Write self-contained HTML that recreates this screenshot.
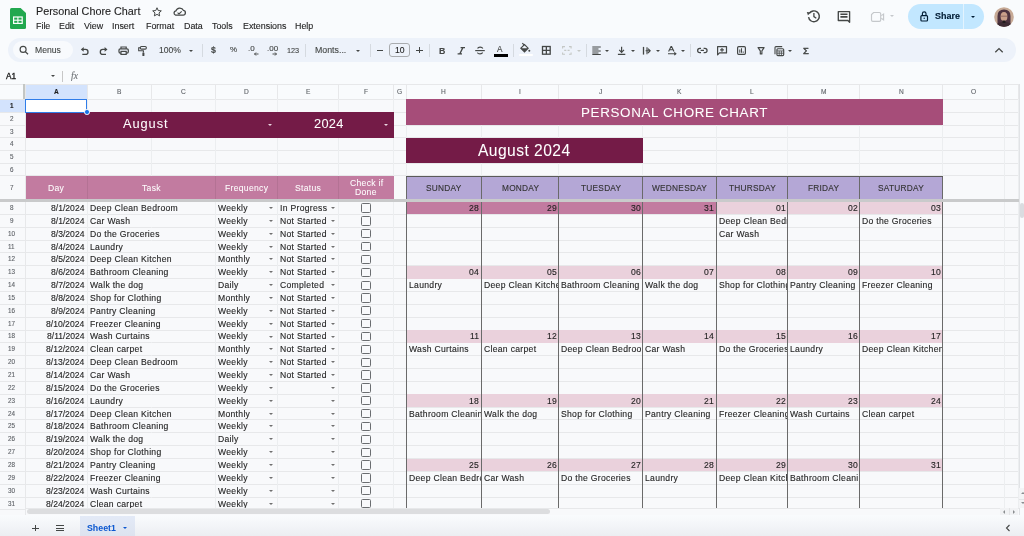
<!DOCTYPE html>
<html><head><meta charset="utf-8"><style>
html,body{margin:0;padding:0;}
body{width:1024px;height:536px;position:relative;overflow:hidden;background:#f9fbfd;font-family:"Liberation Sans",sans-serif;}
body>div,body>svg{position:absolute;}
div>div{position:absolute;}
.t{position:absolute;white-space:nowrap;will-change:transform;-webkit-text-stroke:0.12px currentColor;}
.tri{width:0;height:0;border-style:solid;position:absolute;}
</style></head><body>
<svg style="position:absolute;left:10.2px;top:7.8px" width="16" height="21" viewBox="0 0 16 20.8">
<path d="M1.5 0 H10.6 L16 5 V19.3 Q16 20.8 14.5 20.8 H1.5 Q0 20.8 0 19.3 V1.5 Q0 0 1.5 0Z" fill="#22a84f"/>
<rect x="3.6" y="8.9" width="8.6" height="6.4" fill="none" stroke="#fff" stroke-width="1.2"/>
<line x1="3.6" y1="12.1" x2="12.2" y2="12.1" stroke="#fff" stroke-width="1.1"/>
<line x1="7.9" y1="8.9" x2="7.9" y2="15.3" stroke="#fff" stroke-width="1.1"/>
</svg>
<div class="t" style="left:35.60px;top:5.66px;font-size:10.8px;line-height:10.8px;color:#1f1f1f;">Personal Chore Chart</div>
<svg style="position:absolute;left:151px;top:5.8px" width="12" height="12" viewBox="0 0 24 24"><path d="M12 3.5l2.5 5.6 6.1.6-4.6 4.1 1.3 6-5.3-3.1-5.3 3.1 1.3-6-4.6-4.1 6.1-.6z" fill="none" stroke="#444746" stroke-width="2" stroke-linejoin="round"/></svg>
<svg style="position:absolute;left:0;top:0" width="200" height="24" viewBox="0 0 200 24"><path d="M175.6 15.1H183.1A2.35 2.35 0 0 0 183.5 10.45A4.1 4.1 0 0 0 175.9 10.9A2.15 2.15 0 0 0 175.6 15.1Z" fill="none" stroke="#444746" stroke-width="1.3"/><path d="M177.6 12.6L179 14L181.7 11.4" fill="none" stroke="#444746" stroke-width="1.05"/></svg>
<div class="t" style="left:35.60px;top:21.87px;font-size:8.9px;line-height:8.9px;color:#1f1f1f;">File</div>
<div class="t" style="left:59.00px;top:21.87px;font-size:8.9px;line-height:8.9px;color:#1f1f1f;">Edit</div>
<div class="t" style="left:84.00px;top:21.87px;font-size:8.9px;line-height:8.9px;color:#1f1f1f;">View</div>
<div class="t" style="left:112.30px;top:21.87px;font-size:8.9px;line-height:8.9px;color:#1f1f1f;">Insert</div>
<div class="t" style="left:145.50px;top:21.87px;font-size:8.9px;line-height:8.9px;color:#1f1f1f;">Format</div>
<div class="t" style="left:183.50px;top:21.87px;font-size:8.9px;line-height:8.9px;color:#1f1f1f;">Data</div>
<div class="t" style="left:212.00px;top:21.87px;font-size:8.9px;line-height:8.9px;color:#1f1f1f;">Tools</div>
<div class="t" style="left:243.00px;top:21.87px;font-size:8.9px;line-height:8.9px;color:#1f1f1f;">Extensions</div>
<div class="t" style="left:295.00px;top:21.87px;font-size:8.9px;line-height:8.9px;color:#1f1f1f;">Help</div>
<div style="left:908.40px;top:4.00px;width:75.80px;height:24.80px;background:#c2e7ff;border-radius:12.4px"></div>
<div style="left:963.40px;top:4.00px;width:0.80px;height:24.80px;background:#f9fbfd;opacity:.6"></div>
<div class="t" style="left:934.60px;top:11.98px;font-size:9.0px;line-height:9.0px;color:#001d35;font-weight:bold;">Share</div>
<div class="tri" style="left:971.3px;top:15.8px;border-width:2.4px 2.35px 0 2.35px;border-color:#001d35 transparent transparent transparent"></div>
<svg style="position:absolute;left:994px;top:7px" width="20" height="20" viewBox="0 0 20 20"><defs><clipPath id="cp"><circle cx="10" cy="10" r="9.8"/></clipPath></defs><g clip-path="url(#cp)"><rect width="20" height="20" fill="#c7aa96"/><path d="M3.5 20V9Q3.5 2.5 10 2.5Q16.5 2.5 16.5 9V20Z" fill="#4d3340"/><ellipse cx="10" cy="9.6" rx="3.4" ry="4.6" fill="#c99f8a"/><path d="M6.6 9.2h6.8" stroke="#6b4a4a" stroke-width=".6"/><path d="M2 20Q2 15 10 14.8Q18 15 18 20Z" fill="#3d2b33"/><rect x="8.6" y="13.5" width="2.8" height="2.4" fill="#1e1a1c"/></g></svg>
<div style="left:7.80px;top:37.90px;width:1008.20px;height:24.20px;background:#edf2fa;border-radius:12px"></div>
<div style="left:12.50px;top:41.00px;width:60.90px;height:18.00px;background:#f8fafd;border-radius:9px"></div>
<div class="t" style="left:35.00px;top:46.32px;font-size:8.6px;line-height:8.6px;color:#444746;">Menus</div>
<svg style="position:absolute;left:0;top:0" width="1024" height="100" viewBox="0 0 1024 100">
<g fill="none" stroke="#444746" stroke-linecap="butt">
<circle cx="23.1" cy="49.4" r="3" stroke-width="1.15"/><path d="M25.3 51.6L28 54.3" stroke-width="1.3"/>
<path d="M83 49.4H85.5A2.5 2.5 0 0 1 85.5 54.4H82.3" stroke-width="1.3"/>
<path d="M105.3 49.4H102.8A2.5 2.5 0 0 0 102.8 54.4H106" stroke-width="1.3"/>
<path d="M121 48.8V47H126.2V48.8" stroke-width="1.2"/>
<rect x="119" y="48.8" width="9.3" height="4.3" rx="1.3" stroke-width="1.25"/>
<rect x="121" y="51.4" width="5.2" height="3" fill="#edf2fa" stroke-width="1.2"/>
<rect x="140.3" y="46.5" width="6" height="2.6" rx="1.1" stroke-width="1.15"/>
<path d="M140.3 47.8H138.7V50.8H143.4V52.6" stroke-width="1.1"/>
<path d="M460.6 47.6H465M457.6 53.9H462M462.9 47.6L459.8 53.9" stroke-width="1.25"/>
<path d="M482.8 48.4C482 46.7 478.2 46.7 477.6 48.5M477.4 52.6C478.1 54.3 482 54.3 482.6 52.5" stroke-width="1.15"/>
<path d="M475.2 50.6H484.8" stroke-width="1.15"/>
<path d="M520.9 48.2L524.5 44.6L528.1 48.2L524.5 51.8Z" stroke-width="1.2"/>
<path d="M522.3 43.2L524.3 45.2" stroke-width="1.2"/>
<rect x="542.5" y="46.5" width="7.7" height="7.7" stroke-width="1.3"/>
<path d="M546.35 46.5V54.2M542.5 50.35H550.2" stroke-width="1.3"/>
<path d="M562.6 48.6V46.6H565M569 46.6H571.1V48.6M571.1 52.4V54.3H569M565 54.3H562.6V52.4M564.2 50.4H566.3M567.6 50.4H569.6" stroke="#c4c7c5" stroke-width="1.1"/>
<path d="M592.3 46.9H600.8M592.3 49H598.5M592.3 51H600.8M592.3 53H598.5M592.3 54.4H600.8" stroke-width="1.05"/>
<path d="M621.6 46.7V52.3M619.2 49.9L621.6 52.3L624 49.9M617.9 54.3H625.3" stroke-width="1.2"/>
<path d="M643.5 46.9V54.6" stroke-width="1.3"/>
<path d="M645.6 50.8H650M648 48.6L650.2 50.8L648 53M647 47.3V54.3" stroke-width="1.1"/>
<path d="M668.6 51.5L671 46.5H671.6L674 51.5M669.5 49.8H673.1M668 53.8H675.6M674.3 52.4L675.9 53.8L674.3 55.2" stroke-width="1.1"/>
<path d="M701 48.3H699.8A2.15 2.15 0 0 0 699.8 52.6H701M703.6 48.3H704.9A2.15 2.15 0 0 1 704.9 52.6H703.6M700.6 50.45H704" stroke-width="1.25"/>
<path d="M717.6 54.8V46.6H726.5V52.9H719.5Z" stroke-width="1.2" stroke-linejoin="round"/>
<path d="M722 48V51.8M720.1 49.9H723.9" stroke-width="1.2"/>
<rect x="737.6" y="46.6" width="7.8" height="7.8" rx="1.1" stroke-width="1.2"/>
<path d="M739.8 52.7V49.5M741.5 52.7V48.3M743.2 52.7V51.4" stroke-width="1.05"/>
<path d="M758.1 47.6H764.1L761.9 50.9V53.9H760.3V50.9Z" stroke-width="1.15" stroke-linejoin="round"/>
<path d="M775 54.3V47.6Q775 46.6 776 46.6H782.2" stroke-width="1.1"/>
<rect x="776.9" y="48.7" width="6.8" height="6.9" rx="1" stroke-width="1.15"/>
<path d="M777 50.9H783.6M779.2 51V55.5M781.4 51V55.5M777 53.2H783.6" stroke-width=".8"/>
<path d="M995.3 52.2L999 48.6L1002.7 52.2" stroke-width="1.3"/>
<circle cx="813.9" cy="16.3" r="5.4" stroke-width="1.45" stroke-dasharray="29 5" transform="rotate(215 813.9 16.3)"/>
<path d="M813.9 13.1V16.6L816.3 18.3" stroke-width="1.3"/>
<path d="M838.3 11.6H849.6V22.2L847.9 20.5H838.3Z" stroke-width="1.35" stroke-linejoin="round"/>
<path d="M840.4 14.3H847.5M840.4 16.9H847.5" stroke-width="1.6"/>
<path d="M873.6 12.5H879.4Q880.7 12.5 880.7 13.8V20.1Q880.7 21.4 879.4 21.4H872.8Q871.5 21.4 871.5 20.1V14.6Z" stroke="#c5c8cb" stroke-width="1.15"/>
<path d="M881.3 15.6L883.6 14V19.9L881.3 18.3" stroke="#c5c8cb" stroke-width="1.1"/>
<rect x="920.9" y="15.6" width="6.6" height="5.4" rx=".9" stroke="#001d35" stroke-width="1.2"/>
<path d="M922.4 15.6V13.6A1.8 1.8 0 0 1 926 13.6V15.6" stroke="#001d35" stroke-width="1.15"/>
</g>
<g fill="#444746" stroke="none">
<path d="M80.8 49.4L83.7 47.1V51.7Z"/>
<path d="M107.5 49.4L104.6 47.1V51.7Z"/>
<rect x="142.4" y="52.5" width="2" height="3.4" rx=".5"/>
<path d="M520.9 48.2L528.1 48.2L524.5 51.8Z"/>
<circle cx="529.3" cy="50.7" r="1"/>
<path d="M806.8 12.1L810.9 12.4L807.9 15.3Z"/>
<circle cx="924.2" cy="18.3" r=".7" fill="#001d35"/>
</g>
</svg>
<div class="t" style="left:158.60px;top:46.32px;font-size:8.6px;line-height:8.6px;color:#444746;">100%</div>
<div class="tri" style="left:188.90px;top:49.80px;border-width:2.4px 2.3px 0 2.3px;border-color:#444746 transparent transparent transparent"></div>
<div style="left:201.80px;top:43.50px;width:1.00px;height:13.50px;background:#d5dae0"></div>
<div style="left:305.00px;top:43.50px;width:1.00px;height:13.50px;background:#d5dae0"></div>
<div style="left:370.00px;top:43.50px;width:1.00px;height:13.50px;background:#d5dae0"></div>
<div style="left:429.00px;top:43.50px;width:1.00px;height:13.50px;background:#d5dae0"></div>
<div style="left:513.10px;top:43.50px;width:1.00px;height:13.50px;background:#d5dae0"></div>
<div style="left:585.50px;top:43.50px;width:1.00px;height:13.50px;background:#d5dae0"></div>
<div style="left:690.10px;top:43.50px;width:1.00px;height:13.50px;background:#d5dae0"></div>
<div class="t" style="left:211.20px;top:45.95px;font-size:8.8px;line-height:8.8px;color:#444746;font-weight:bold;">$</div>
<div class="t" style="left:229.90px;top:46.03px;font-size:8.0px;line-height:8.0px;color:#444746;">%</div>
<div class="t" style="left:247.80px;top:45.33px;font-size:8.0px;line-height:8.0px;color:#444746;">.0</div>
<svg style="position:absolute;left:253px;top:51.8px" width="6" height="4" viewBox="0 0 12 8"><path d="M11 4H3M6 1L3 4l3 3" fill="none" stroke="#444746" stroke-width="1.9"/></svg>
<div class="t" style="left:267.40px;top:45.33px;font-size:8.0px;line-height:8.0px;color:#444746;">.00</div>
<svg style="position:absolute;left:272px;top:51.8px" width="6" height="4" viewBox="0 0 12 8"><path d="M1 4h8M6 1l3 3-3 3" fill="none" stroke="#444746" stroke-width="1.9"/></svg>
<div class="t" style="left:287.10px;top:46.62px;font-size:7.3px;line-height:7.3px;color:#444746;">123</div>
<div class="t" style="left:314.80px;top:46.35px;font-size:8.8px;line-height:8.8px;color:#444746;">Monts...</div>
<div class="tri" style="left:356.00px;top:49.80px;border-width:2.4px 2.3px 0 2.3px;border-color:#444746 transparent transparent transparent"></div>
<div class="tri" style="left:889.80px;top:14.80px;border-width:2px 2.0px 0 2.0px;border-color:#c5c8cb transparent transparent transparent"></div>
<div style="left:377.00px;top:49.50px;width:6.30px;height:1.40px;background:#444746"></div>
<div style="left:389.40px;top:42.90px;width:20.40px;height:14.50px;border:1.1px solid #a9acaf;border-radius:3px;box-sizing:border-box"></div>
<div class="t" style="left:394.82px;top:46.32px;font-size:8.6px;line-height:8.6px;color:#1f1f1f;">10</div>
<div style="left:416.30px;top:49.50px;width:6.30px;height:1.40px;background:#444746"></div>
<div style="left:418.75px;top:47.10px;width:1.40px;height:6.20px;background:#444746"></div>
<div class="t" style="left:438.60px;top:46.55px;font-size:8.8px;line-height:8.8px;color:#444746;font-weight:bold;">B</div>
<div class="t" style="left:497.20px;top:45.66px;font-size:8.2px;line-height:8.2px;color:#444746;">A</div>
<div style="left:494.00px;top:54.30px;width:14.00px;height:2.30px;background:#000"></div>
<div style="left:518.90px;top:53.70px;width:14.50px;height:2.60px;background:#fff;border-radius:1px"></div>
<div class="tri" style="left:577.20px;top:49.50px;border-width:2.4px 2.3px 0 2.3px;border-color:#c4c7c5 transparent transparent transparent"></div>
<div class="tri" style="left:605.40px;top:49.50px;border-width:2.4px 2.3px 0 2.3px;border-color:#444746 transparent transparent transparent"></div>
<div class="tri" style="left:630.50px;top:49.50px;border-width:2.4px 2.3px 0 2.3px;border-color:#444746 transparent transparent transparent"></div>
<div class="tri" style="left:655.50px;top:49.50px;border-width:2.4px 2.3px 0 2.3px;border-color:#444746 transparent transparent transparent"></div>
<div class="tri" style="left:680.60px;top:49.50px;border-width:2.4px 2.3px 0 2.3px;border-color:#444746 transparent transparent transparent"></div>
<div class="tri" style="left:788.40px;top:49.50px;border-width:2.4px 2.3px 0 2.3px;border-color:#444746 transparent transparent transparent"></div>
<div class="t" style="left:803.40px;top:46.34px;font-size:9.4px;line-height:9.4px;color:#444746;-webkit-text-stroke:0.45px #444746;">&Sigma;</div>
<div class="t" style="left:5.90px;top:71.57px;font-size:8.3px;line-height:8.3px;color:#1f1f1f;-webkit-text-stroke:0.35px #1f1f1f;">A1</div>
<div class="tri" style="left:50.8px;top:74.6px;border-width:2.4px 2.4px 0 2.4px;border-color:#444746 transparent transparent transparent"></div>
<div style="left:62.00px;top:71.00px;width:1.00px;height:10.50px;background:#c7c7c7"></div>
<div class="t" style="left:70.60px;top:71.27px;font-size:9.6px;line-height:9.6px;color:#6f7377;font-family:'Liberation Serif',serif;font-style:italic;">fx</div>
<div style="left:0.00px;top:84.40px;width:1018.50px;height:431.10px;background:#f8f9fb"></div>
<div style="left:0.00px;top:84.40px;width:1018.50px;height:14.90px;background:#f9fbfd"></div>
<div style="left:25.50px;top:84.40px;width:61.50px;height:14.90px;background:#d3e3fd"></div>
<div style="left:0.00px;top:99.30px;width:25.50px;height:13.10px;background:#d3e3fd"></div>
<div style="left:0.00px;top:98.80px;width:1018.50px;height:1.00px;background:#e7e8ea"></div>
<div style="left:0.00px;top:111.90px;width:1018.50px;height:1.00px;background:#e7e8ea"></div>
<div style="left:0.00px;top:124.75px;width:1018.50px;height:1.00px;background:#e7e8ea"></div>
<div style="left:0.00px;top:137.30px;width:1018.50px;height:1.00px;background:#e7e8ea"></div>
<div style="left:0.00px;top:149.80px;width:1018.50px;height:1.00px;background:#e7e8ea"></div>
<div style="left:0.00px;top:162.60px;width:1018.50px;height:1.00px;background:#e7e8ea"></div>
<div style="left:0.00px;top:175.40px;width:1018.50px;height:1.00px;background:#e7e8ea"></div>
<div style="left:0.00px;top:198.70px;width:1018.50px;height:1.00px;background:#e7e8ea"></div>
<div style="left:0.00px;top:213.85px;width:1018.50px;height:1.00px;background:#e7e8ea"></div>
<div style="left:0.00px;top:226.70px;width:1018.50px;height:1.00px;background:#e7e8ea"></div>
<div style="left:0.00px;top:239.55px;width:1018.50px;height:1.00px;background:#e7e8ea"></div>
<div style="left:0.00px;top:252.40px;width:1018.50px;height:1.00px;background:#e7e8ea"></div>
<div style="left:0.00px;top:265.25px;width:1018.50px;height:1.00px;background:#e7e8ea"></div>
<div style="left:0.00px;top:278.10px;width:1018.50px;height:1.00px;background:#e7e8ea"></div>
<div style="left:0.00px;top:290.95px;width:1018.50px;height:1.00px;background:#e7e8ea"></div>
<div style="left:0.00px;top:303.80px;width:1018.50px;height:1.00px;background:#e7e8ea"></div>
<div style="left:0.00px;top:316.65px;width:1018.50px;height:1.00px;background:#e7e8ea"></div>
<div style="left:0.00px;top:329.50px;width:1018.50px;height:1.00px;background:#e7e8ea"></div>
<div style="left:0.00px;top:342.35px;width:1018.50px;height:1.00px;background:#e7e8ea"></div>
<div style="left:0.00px;top:355.20px;width:1018.50px;height:1.00px;background:#e7e8ea"></div>
<div style="left:0.00px;top:368.05px;width:1018.50px;height:1.00px;background:#e7e8ea"></div>
<div style="left:0.00px;top:380.90px;width:1018.50px;height:1.00px;background:#e7e8ea"></div>
<div style="left:0.00px;top:393.75px;width:1018.50px;height:1.00px;background:#e7e8ea"></div>
<div style="left:0.00px;top:406.60px;width:1018.50px;height:1.00px;background:#e7e8ea"></div>
<div style="left:0.00px;top:419.45px;width:1018.50px;height:1.00px;background:#e7e8ea"></div>
<div style="left:0.00px;top:432.30px;width:1018.50px;height:1.00px;background:#e7e8ea"></div>
<div style="left:0.00px;top:445.15px;width:1018.50px;height:1.00px;background:#e7e8ea"></div>
<div style="left:0.00px;top:458.00px;width:1018.50px;height:1.00px;background:#e7e8ea"></div>
<div style="left:0.00px;top:470.85px;width:1018.50px;height:1.00px;background:#e7e8ea"></div>
<div style="left:0.00px;top:483.70px;width:1018.50px;height:1.00px;background:#e7e8ea"></div>
<div style="left:0.00px;top:496.55px;width:1018.50px;height:1.00px;background:#e7e8ea"></div>
<div style="left:0.00px;top:509.40px;width:1018.50px;height:1.00px;background:#e7e8ea"></div>
<div style="left:0.00px;top:84.00px;width:1018.50px;height:0.80px;background:#e7e8ea"></div>
<div style="left:25.00px;top:84.40px;width:1.00px;height:431.10px;background:#eceef0"></div>
<div style="left:25.00px;top:84.40px;width:1.00px;height:14.90px;background:#e7e8ea"></div>
<div style="left:86.50px;top:84.40px;width:1.00px;height:431.10px;background:#eceef0"></div>
<div style="left:86.50px;top:84.40px;width:1.00px;height:14.90px;background:#e7e8ea"></div>
<div style="left:151.00px;top:84.40px;width:1.00px;height:431.10px;background:#eceef0"></div>
<div style="left:151.00px;top:84.40px;width:1.00px;height:14.90px;background:#e7e8ea"></div>
<div style="left:215.00px;top:84.40px;width:1.00px;height:431.10px;background:#eceef0"></div>
<div style="left:215.00px;top:84.40px;width:1.00px;height:14.90px;background:#e7e8ea"></div>
<div style="left:277.25px;top:84.40px;width:1.00px;height:431.10px;background:#eceef0"></div>
<div style="left:277.25px;top:84.40px;width:1.00px;height:14.90px;background:#e7e8ea"></div>
<div style="left:338.25px;top:84.40px;width:1.00px;height:431.10px;background:#eceef0"></div>
<div style="left:338.25px;top:84.40px;width:1.00px;height:14.90px;background:#e7e8ea"></div>
<div style="left:393.00px;top:84.40px;width:1.00px;height:431.10px;background:#eceef0"></div>
<div style="left:393.00px;top:84.40px;width:1.00px;height:14.90px;background:#e7e8ea"></div>
<div style="left:405.75px;top:84.40px;width:1.00px;height:431.10px;background:#eceef0"></div>
<div style="left:405.75px;top:84.40px;width:1.00px;height:14.90px;background:#e7e8ea"></div>
<div style="left:480.75px;top:84.40px;width:1.00px;height:431.10px;background:#eceef0"></div>
<div style="left:480.75px;top:84.40px;width:1.00px;height:14.90px;background:#e7e8ea"></div>
<div style="left:558.00px;top:84.40px;width:1.00px;height:431.10px;background:#eceef0"></div>
<div style="left:558.00px;top:84.40px;width:1.00px;height:14.90px;background:#e7e8ea"></div>
<div style="left:642.00px;top:84.40px;width:1.00px;height:431.10px;background:#eceef0"></div>
<div style="left:642.00px;top:84.40px;width:1.00px;height:14.90px;background:#e7e8ea"></div>
<div style="left:715.75px;top:84.40px;width:1.00px;height:431.10px;background:#eceef0"></div>
<div style="left:715.75px;top:84.40px;width:1.00px;height:14.90px;background:#e7e8ea"></div>
<div style="left:787.25px;top:84.40px;width:1.00px;height:431.10px;background:#eceef0"></div>
<div style="left:787.25px;top:84.40px;width:1.00px;height:14.90px;background:#e7e8ea"></div>
<div style="left:859.00px;top:84.40px;width:1.00px;height:431.10px;background:#eceef0"></div>
<div style="left:859.00px;top:84.40px;width:1.00px;height:14.90px;background:#e7e8ea"></div>
<div style="left:942.25px;top:84.40px;width:1.00px;height:431.10px;background:#eceef0"></div>
<div style="left:942.25px;top:84.40px;width:1.00px;height:14.90px;background:#e7e8ea"></div>
<div style="left:1003.75px;top:84.40px;width:1.00px;height:431.10px;background:#eceef0"></div>
<div style="left:1003.75px;top:84.40px;width:1.00px;height:14.90px;background:#e7e8ea"></div>
<div style="left:1018.00px;top:84.40px;width:1.00px;height:431.10px;background:#eceef0"></div>
<div style="left:1018.00px;top:84.40px;width:1.00px;height:14.90px;background:#e7e8ea"></div>
<div style="left:25.00px;top:84.40px;width:1.00px;height:431.10px;background:#e7e8ea"></div>
<div style="left:22.80px;top:84.40px;width:2.70px;height:14.90px;background:#c4c7c5"></div>
<div class="t" style="left:53.87px;top:89.01px;font-size:6.6px;line-height:6.6px;color:#1f1f1f;font-weight:bold;">A</div>
<div class="t" style="left:117.05px;top:89.01px;font-size:6.6px;line-height:6.6px;color:#5f6368;">B</div>
<div class="t" style="left:181.12px;top:89.01px;font-size:6.6px;line-height:6.6px;color:#5f6368;">C</div>
<div class="t" style="left:244.24px;top:89.01px;font-size:6.6px;line-height:6.6px;color:#5f6368;">D</div>
<div class="t" style="left:306.05px;top:89.01px;font-size:6.6px;line-height:6.6px;color:#5f6368;">E</div>
<div class="t" style="left:364.11px;top:89.01px;font-size:6.6px;line-height:6.6px;color:#5f6368;">F</div>
<div class="t" style="left:397.31px;top:89.01px;font-size:6.6px;line-height:6.6px;color:#5f6368;">G</div>
<div class="t" style="left:441.37px;top:89.01px;font-size:6.6px;line-height:6.6px;color:#5f6368;">H</div>
<div class="t" style="left:518.96px;top:89.01px;font-size:6.6px;line-height:6.6px;color:#5f6368;">I</div>
<div class="t" style="left:598.85px;top:89.01px;font-size:6.6px;line-height:6.6px;color:#5f6368;">J</div>
<div class="t" style="left:677.17px;top:89.01px;font-size:6.6px;line-height:6.6px;color:#5f6368;">K</div>
<div class="t" style="left:750.16px;top:89.01px;font-size:6.6px;line-height:6.6px;color:#5f6368;">L</div>
<div class="t" style="left:820.88px;top:89.01px;font-size:6.6px;line-height:6.6px;color:#5f6368;">M</div>
<div class="t" style="left:898.74px;top:89.01px;font-size:6.6px;line-height:6.6px;color:#5f6368;">N</div>
<div class="t" style="left:970.93px;top:89.01px;font-size:6.6px;line-height:6.6px;color:#5f6368;">O</div>
<div class="t" style="left:9.75px;top:102.92px;font-size:6.3px;line-height:6.3px;color:#1f1f1f;font-weight:bold;">1</div>
<div class="t" style="left:9.75px;top:115.89px;font-size:6.3px;line-height:6.3px;color:#5f6368;">2</div>
<div class="t" style="left:9.75px;top:128.59px;font-size:6.3px;line-height:6.3px;color:#5f6368;">3</div>
<div class="t" style="left:9.75px;top:141.12px;font-size:6.3px;line-height:6.3px;color:#5f6368;">4</div>
<div class="t" style="left:9.75px;top:153.77px;font-size:6.3px;line-height:6.3px;color:#5f6368;">5</div>
<div class="t" style="left:9.75px;top:166.57px;font-size:6.3px;line-height:6.3px;color:#5f6368;">6</div>
<div class="t" style="left:9.75px;top:184.62px;font-size:6.3px;line-height:6.3px;color:#5f6368;">7</div>
<div class="t" style="left:9.75px;top:204.99px;font-size:6.3px;line-height:6.3px;color:#5f6368;">8</div>
<div class="t" style="left:9.75px;top:217.84px;font-size:6.3px;line-height:6.3px;color:#5f6368;">9</div>
<div class="t" style="left:8.00px;top:230.69px;font-size:6.3px;line-height:6.3px;color:#5f6368;">10</div>
<div class="t" style="left:8.23px;top:243.54px;font-size:6.3px;line-height:6.3px;color:#5f6368;">11</div>
<div class="t" style="left:8.00px;top:256.39px;font-size:6.3px;line-height:6.3px;color:#5f6368;">12</div>
<div class="t" style="left:8.00px;top:269.24px;font-size:6.3px;line-height:6.3px;color:#5f6368;">13</div>
<div class="t" style="left:8.00px;top:282.09px;font-size:6.3px;line-height:6.3px;color:#5f6368;">14</div>
<div class="t" style="left:8.00px;top:294.94px;font-size:6.3px;line-height:6.3px;color:#5f6368;">15</div>
<div class="t" style="left:8.00px;top:307.79px;font-size:6.3px;line-height:6.3px;color:#5f6368;">16</div>
<div class="t" style="left:8.00px;top:320.64px;font-size:6.3px;line-height:6.3px;color:#5f6368;">17</div>
<div class="t" style="left:8.00px;top:333.49px;font-size:6.3px;line-height:6.3px;color:#5f6368;">18</div>
<div class="t" style="left:8.00px;top:346.34px;font-size:6.3px;line-height:6.3px;color:#5f6368;">19</div>
<div class="t" style="left:8.00px;top:359.19px;font-size:6.3px;line-height:6.3px;color:#5f6368;">20</div>
<div class="t" style="left:8.00px;top:372.04px;font-size:6.3px;line-height:6.3px;color:#5f6368;">21</div>
<div class="t" style="left:8.00px;top:384.89px;font-size:6.3px;line-height:6.3px;color:#5f6368;">22</div>
<div class="t" style="left:8.00px;top:397.74px;font-size:6.3px;line-height:6.3px;color:#5f6368;">23</div>
<div class="t" style="left:8.00px;top:410.59px;font-size:6.3px;line-height:6.3px;color:#5f6368;">24</div>
<div class="t" style="left:8.00px;top:423.44px;font-size:6.3px;line-height:6.3px;color:#5f6368;">25</div>
<div class="t" style="left:8.00px;top:436.29px;font-size:6.3px;line-height:6.3px;color:#5f6368;">26</div>
<div class="t" style="left:8.00px;top:449.14px;font-size:6.3px;line-height:6.3px;color:#5f6368;">27</div>
<div class="t" style="left:8.00px;top:461.99px;font-size:6.3px;line-height:6.3px;color:#5f6368;">28</div>
<div class="t" style="left:8.00px;top:474.84px;font-size:6.3px;line-height:6.3px;color:#5f6368;">29</div>
<div class="t" style="left:8.00px;top:487.69px;font-size:6.3px;line-height:6.3px;color:#5f6368;">30</div>
<div class="t" style="left:8.00px;top:500.54px;font-size:6.3px;line-height:6.3px;color:#5f6368;">31</div>
<div style="left:25.50px;top:112.40px;width:368.00px;height:25.40px;background:#741b47"></div>
<div class="t" style="left:122.82px;top:117.96px;font-size:12.8px;line-height:12.8px;color:#fff;letter-spacing:0.95px;-webkit-text-stroke:0.05px #fff;">August</div>
<div class="tri" style="left:268.1px;top:123.8px;border-width:2.9px 2.5px 0 2.5px;border-color:#ead6e0 transparent transparent transparent"></div>
<div class="t" style="left:314.46px;top:117.96px;font-size:12.8px;line-height:12.8px;color:#fff;letter-spacing:0.3px;-webkit-text-stroke:0.05px #fff;">2024</div>
<div class="tri" style="left:384.4px;top:123.8px;border-width:2.9px 2.5px 0 2.5px;border-color:#ead6e0 transparent transparent transparent"></div>
<div style="left:25.50px;top:175.90px;width:368.00px;height:23.30px;background:#c27ba0"></div>
<div style="left:86.50px;top:175.90px;width:1.00px;height:23.30px;background:rgba(0,0,0,.07)"></div>
<div style="left:215.00px;top:175.90px;width:1.00px;height:23.30px;background:rgba(0,0,0,.07)"></div>
<div style="left:277.25px;top:175.90px;width:1.00px;height:23.30px;background:rgba(0,0,0,.07)"></div>
<div style="left:338.25px;top:175.90px;width:1.00px;height:23.30px;background:rgba(0,0,0,.07)"></div>
<div class="t" style="left:48.15px;top:184.02px;font-size:8.6px;line-height:8.6px;color:#fff;letter-spacing:0.3px;-webkit-text-stroke:0.05px #fff;">Day</div>
<div class="t" style="left:141.81px;top:184.02px;font-size:8.6px;line-height:8.6px;color:#fff;letter-spacing:0.3px;-webkit-text-stroke:0.05px #fff;">Task</div>
<div class="t" style="left:224.93px;top:184.02px;font-size:8.6px;line-height:8.6px;color:#fff;letter-spacing:0.3px;-webkit-text-stroke:0.05px #fff;">Frequency</div>
<div class="t" style="left:295.16px;top:184.02px;font-size:8.6px;line-height:8.6px;color:#fff;letter-spacing:0.3px;-webkit-text-stroke:0.05px #fff;">Status</div>
<div class="t" style="left:349.57px;top:178.82px;font-size:8.6px;line-height:8.6px;color:#fff;letter-spacing:0.3px;-webkit-text-stroke:0.05px #fff;">Check if</div>
<div class="t" style="left:355.42px;top:188.22px;font-size:8.6px;line-height:8.6px;color:#fff;letter-spacing:0.3px;-webkit-text-stroke:0.05px #fff;">Done</div>
<div style="left:151.00px;top:202.00px;width:1.00px;height:11.85px;background:#f8f9fb"></div>
<div class="t" style="left:51.02px;top:203.97px;font-size:8.6px;line-height:8.6px;color:#1f1f1f;">8/1/2024</div>
<div class="t" style="left:89.70px;top:203.97px;font-size:8.6px;line-height:8.6px;color:#1f1f1f;letter-spacing:0.3px;">Deep Clean Bedroom</div>
<div class="t" style="left:218.20px;top:203.97px;font-size:8.6px;line-height:8.6px;color:#1f1f1f;letter-spacing:0.3px;">Weekly</div>
<div class="tri" style="left:268.8px;top:207.00px;border-width:2.2px 2.2px 0 2.2px;border-color:#6f6f6f transparent transparent transparent"></div>
<div class="t" style="left:280.00px;top:203.97px;font-size:8.6px;line-height:8.6px;color:#1f1f1f;letter-spacing:0.3px;">In Progress</div>
<div class="tri" style="left:330.6px;top:207.00px;border-width:2.2px 2.2px 0 2.2px;border-color:#6f6f6f transparent transparent transparent"></div>
<div style="left:361.40px;top:203.40px;width:9.40px;height:9.30px;border:1.2px solid #6a6d70;border-radius:1.5px;box-sizing:border-box"></div>
<div style="left:151.00px;top:214.85px;width:1.00px;height:11.85px;background:#f8f9fb"></div>
<div class="t" style="left:51.02px;top:216.82px;font-size:8.6px;line-height:8.6px;color:#1f1f1f;">8/1/2024</div>
<div class="t" style="left:89.70px;top:216.82px;font-size:8.6px;line-height:8.6px;color:#1f1f1f;letter-spacing:0.3px;">Car Wash</div>
<div class="t" style="left:218.20px;top:216.82px;font-size:8.6px;line-height:8.6px;color:#1f1f1f;letter-spacing:0.3px;">Weekly</div>
<div class="tri" style="left:268.8px;top:219.85px;border-width:2.2px 2.2px 0 2.2px;border-color:#6f6f6f transparent transparent transparent"></div>
<div class="t" style="left:280.00px;top:216.82px;font-size:8.6px;line-height:8.6px;color:#1f1f1f;letter-spacing:0.3px;">Not Started</div>
<div class="tri" style="left:330.6px;top:219.85px;border-width:2.2px 2.2px 0 2.2px;border-color:#6f6f6f transparent transparent transparent"></div>
<div style="left:361.40px;top:216.25px;width:9.40px;height:9.30px;border:1.2px solid #6a6d70;border-radius:1.5px;box-sizing:border-box"></div>
<div style="left:151.00px;top:227.70px;width:1.00px;height:11.85px;background:#f8f9fb"></div>
<div class="t" style="left:51.02px;top:229.67px;font-size:8.6px;line-height:8.6px;color:#1f1f1f;">8/3/2024</div>
<div class="t" style="left:89.70px;top:229.67px;font-size:8.6px;line-height:8.6px;color:#1f1f1f;letter-spacing:0.3px;">Do the Groceries</div>
<div class="t" style="left:218.20px;top:229.67px;font-size:8.6px;line-height:8.6px;color:#1f1f1f;letter-spacing:0.3px;">Weekly</div>
<div class="tri" style="left:268.8px;top:232.70px;border-width:2.2px 2.2px 0 2.2px;border-color:#6f6f6f transparent transparent transparent"></div>
<div class="t" style="left:280.00px;top:229.67px;font-size:8.6px;line-height:8.6px;color:#1f1f1f;letter-spacing:0.3px;">Not Started</div>
<div class="tri" style="left:330.6px;top:232.70px;border-width:2.2px 2.2px 0 2.2px;border-color:#6f6f6f transparent transparent transparent"></div>
<div style="left:361.40px;top:229.10px;width:9.40px;height:9.30px;border:1.2px solid #6a6d70;border-radius:1.5px;box-sizing:border-box"></div>
<div style="left:151.00px;top:240.55px;width:1.00px;height:11.85px;background:#f8f9fb"></div>
<div class="t" style="left:51.02px;top:242.52px;font-size:8.6px;line-height:8.6px;color:#1f1f1f;">8/4/2024</div>
<div class="t" style="left:89.70px;top:242.52px;font-size:8.6px;line-height:8.6px;color:#1f1f1f;letter-spacing:0.3px;">Laundry</div>
<div class="t" style="left:218.20px;top:242.52px;font-size:8.6px;line-height:8.6px;color:#1f1f1f;letter-spacing:0.3px;">Weekly</div>
<div class="tri" style="left:268.8px;top:245.55px;border-width:2.2px 2.2px 0 2.2px;border-color:#6f6f6f transparent transparent transparent"></div>
<div class="t" style="left:280.00px;top:242.52px;font-size:8.6px;line-height:8.6px;color:#1f1f1f;letter-spacing:0.3px;">Not Started</div>
<div class="tri" style="left:330.6px;top:245.55px;border-width:2.2px 2.2px 0 2.2px;border-color:#6f6f6f transparent transparent transparent"></div>
<div style="left:361.40px;top:241.95px;width:9.40px;height:9.30px;border:1.2px solid #6a6d70;border-radius:1.5px;box-sizing:border-box"></div>
<div style="left:151.00px;top:253.40px;width:1.00px;height:11.85px;background:#f8f9fb"></div>
<div class="t" style="left:51.02px;top:255.37px;font-size:8.6px;line-height:8.6px;color:#1f1f1f;">8/5/2024</div>
<div class="t" style="left:89.70px;top:255.37px;font-size:8.6px;line-height:8.6px;color:#1f1f1f;letter-spacing:0.3px;">Deep Clean Kitchen</div>
<div class="t" style="left:218.20px;top:255.37px;font-size:8.6px;line-height:8.6px;color:#1f1f1f;letter-spacing:0.3px;">Monthly</div>
<div class="tri" style="left:268.8px;top:258.40px;border-width:2.2px 2.2px 0 2.2px;border-color:#6f6f6f transparent transparent transparent"></div>
<div class="t" style="left:280.00px;top:255.37px;font-size:8.6px;line-height:8.6px;color:#1f1f1f;letter-spacing:0.3px;">Not Started</div>
<div class="tri" style="left:330.6px;top:258.40px;border-width:2.2px 2.2px 0 2.2px;border-color:#6f6f6f transparent transparent transparent"></div>
<div style="left:361.40px;top:254.80px;width:9.40px;height:9.30px;border:1.2px solid #6a6d70;border-radius:1.5px;box-sizing:border-box"></div>
<div style="left:151.00px;top:266.25px;width:1.00px;height:11.85px;background:#f8f9fb"></div>
<div class="t" style="left:51.02px;top:268.22px;font-size:8.6px;line-height:8.6px;color:#1f1f1f;">8/6/2024</div>
<div class="t" style="left:89.70px;top:268.22px;font-size:8.6px;line-height:8.6px;color:#1f1f1f;letter-spacing:0.3px;">Bathroom Cleaning</div>
<div class="t" style="left:218.20px;top:268.22px;font-size:8.6px;line-height:8.6px;color:#1f1f1f;letter-spacing:0.3px;">Weekly</div>
<div class="tri" style="left:268.8px;top:271.25px;border-width:2.2px 2.2px 0 2.2px;border-color:#6f6f6f transparent transparent transparent"></div>
<div class="t" style="left:280.00px;top:268.22px;font-size:8.6px;line-height:8.6px;color:#1f1f1f;letter-spacing:0.3px;">Not Started</div>
<div class="tri" style="left:330.6px;top:271.25px;border-width:2.2px 2.2px 0 2.2px;border-color:#6f6f6f transparent transparent transparent"></div>
<div style="left:361.40px;top:267.65px;width:9.40px;height:9.30px;border:1.2px solid #6a6d70;border-radius:1.5px;box-sizing:border-box"></div>
<div style="left:151.00px;top:279.10px;width:1.00px;height:11.85px;background:#f8f9fb"></div>
<div class="t" style="left:51.02px;top:281.07px;font-size:8.6px;line-height:8.6px;color:#1f1f1f;">8/7/2024</div>
<div class="t" style="left:89.70px;top:281.07px;font-size:8.6px;line-height:8.6px;color:#1f1f1f;letter-spacing:0.3px;">Walk the dog</div>
<div class="t" style="left:218.20px;top:281.07px;font-size:8.6px;line-height:8.6px;color:#1f1f1f;letter-spacing:0.3px;">Daily</div>
<div class="tri" style="left:268.8px;top:284.10px;border-width:2.2px 2.2px 0 2.2px;border-color:#6f6f6f transparent transparent transparent"></div>
<div class="t" style="left:280.00px;top:281.07px;font-size:8.6px;line-height:8.6px;color:#1f1f1f;letter-spacing:0.3px;">Completed</div>
<div class="tri" style="left:330.6px;top:284.10px;border-width:2.2px 2.2px 0 2.2px;border-color:#6f6f6f transparent transparent transparent"></div>
<div style="left:361.40px;top:280.50px;width:9.40px;height:9.30px;border:1.2px solid #6a6d70;border-radius:1.5px;box-sizing:border-box"></div>
<div style="left:151.00px;top:291.95px;width:1.00px;height:11.85px;background:#f8f9fb"></div>
<div class="t" style="left:51.02px;top:293.92px;font-size:8.6px;line-height:8.6px;color:#1f1f1f;">8/8/2024</div>
<div class="t" style="left:89.70px;top:293.92px;font-size:8.6px;line-height:8.6px;color:#1f1f1f;letter-spacing:0.3px;">Shop for Clothing</div>
<div class="t" style="left:218.20px;top:293.92px;font-size:8.6px;line-height:8.6px;color:#1f1f1f;letter-spacing:0.3px;">Monthly</div>
<div class="tri" style="left:268.8px;top:296.95px;border-width:2.2px 2.2px 0 2.2px;border-color:#6f6f6f transparent transparent transparent"></div>
<div class="t" style="left:280.00px;top:293.92px;font-size:8.6px;line-height:8.6px;color:#1f1f1f;letter-spacing:0.3px;">Not Started</div>
<div class="tri" style="left:330.6px;top:296.95px;border-width:2.2px 2.2px 0 2.2px;border-color:#6f6f6f transparent transparent transparent"></div>
<div style="left:361.40px;top:293.35px;width:9.40px;height:9.30px;border:1.2px solid #6a6d70;border-radius:1.5px;box-sizing:border-box"></div>
<div style="left:151.00px;top:304.80px;width:1.00px;height:11.85px;background:#f8f9fb"></div>
<div class="t" style="left:51.02px;top:306.77px;font-size:8.6px;line-height:8.6px;color:#1f1f1f;">8/9/2024</div>
<div class="t" style="left:89.70px;top:306.77px;font-size:8.6px;line-height:8.6px;color:#1f1f1f;letter-spacing:0.3px;">Pantry Cleaning</div>
<div class="t" style="left:218.20px;top:306.77px;font-size:8.6px;line-height:8.6px;color:#1f1f1f;letter-spacing:0.3px;">Weekly</div>
<div class="tri" style="left:268.8px;top:309.80px;border-width:2.2px 2.2px 0 2.2px;border-color:#6f6f6f transparent transparent transparent"></div>
<div class="t" style="left:280.00px;top:306.77px;font-size:8.6px;line-height:8.6px;color:#1f1f1f;letter-spacing:0.3px;">Not Started</div>
<div class="tri" style="left:330.6px;top:309.80px;border-width:2.2px 2.2px 0 2.2px;border-color:#6f6f6f transparent transparent transparent"></div>
<div style="left:361.40px;top:306.20px;width:9.40px;height:9.30px;border:1.2px solid #6a6d70;border-radius:1.5px;box-sizing:border-box"></div>
<div style="left:151.00px;top:317.65px;width:1.00px;height:11.85px;background:#f8f9fb"></div>
<div class="t" style="left:46.24px;top:319.62px;font-size:8.6px;line-height:8.6px;color:#1f1f1f;">8/10/2024</div>
<div class="t" style="left:89.70px;top:319.62px;font-size:8.6px;line-height:8.6px;color:#1f1f1f;letter-spacing:0.3px;">Freezer Cleaning</div>
<div class="t" style="left:218.20px;top:319.62px;font-size:8.6px;line-height:8.6px;color:#1f1f1f;letter-spacing:0.3px;">Weekly</div>
<div class="tri" style="left:268.8px;top:322.65px;border-width:2.2px 2.2px 0 2.2px;border-color:#6f6f6f transparent transparent transparent"></div>
<div class="t" style="left:280.00px;top:319.62px;font-size:8.6px;line-height:8.6px;color:#1f1f1f;letter-spacing:0.3px;">Not Started</div>
<div class="tri" style="left:330.6px;top:322.65px;border-width:2.2px 2.2px 0 2.2px;border-color:#6f6f6f transparent transparent transparent"></div>
<div style="left:361.40px;top:319.05px;width:9.40px;height:9.30px;border:1.2px solid #6a6d70;border-radius:1.5px;box-sizing:border-box"></div>
<div style="left:151.00px;top:330.50px;width:1.00px;height:11.85px;background:#f8f9fb"></div>
<div class="t" style="left:46.88px;top:332.47px;font-size:8.6px;line-height:8.6px;color:#1f1f1f;">8/11/2024</div>
<div class="t" style="left:89.70px;top:332.47px;font-size:8.6px;line-height:8.6px;color:#1f1f1f;letter-spacing:0.3px;">Wash Curtains</div>
<div class="t" style="left:218.20px;top:332.47px;font-size:8.6px;line-height:8.6px;color:#1f1f1f;letter-spacing:0.3px;">Weekly</div>
<div class="tri" style="left:268.8px;top:335.50px;border-width:2.2px 2.2px 0 2.2px;border-color:#6f6f6f transparent transparent transparent"></div>
<div class="t" style="left:280.00px;top:332.47px;font-size:8.6px;line-height:8.6px;color:#1f1f1f;letter-spacing:0.3px;">Not Started</div>
<div class="tri" style="left:330.6px;top:335.50px;border-width:2.2px 2.2px 0 2.2px;border-color:#6f6f6f transparent transparent transparent"></div>
<div style="left:361.40px;top:331.90px;width:9.40px;height:9.30px;border:1.2px solid #6a6d70;border-radius:1.5px;box-sizing:border-box"></div>
<div style="left:151.00px;top:343.35px;width:1.00px;height:11.85px;background:#f8f9fb"></div>
<div class="t" style="left:46.24px;top:345.32px;font-size:8.6px;line-height:8.6px;color:#1f1f1f;">8/12/2024</div>
<div class="t" style="left:89.70px;top:345.32px;font-size:8.6px;line-height:8.6px;color:#1f1f1f;letter-spacing:0.3px;">Clean carpet</div>
<div class="t" style="left:218.20px;top:345.32px;font-size:8.6px;line-height:8.6px;color:#1f1f1f;letter-spacing:0.3px;">Monthly</div>
<div class="tri" style="left:268.8px;top:348.35px;border-width:2.2px 2.2px 0 2.2px;border-color:#6f6f6f transparent transparent transparent"></div>
<div class="t" style="left:280.00px;top:345.32px;font-size:8.6px;line-height:8.6px;color:#1f1f1f;letter-spacing:0.3px;">Not Started</div>
<div class="tri" style="left:330.6px;top:348.35px;border-width:2.2px 2.2px 0 2.2px;border-color:#6f6f6f transparent transparent transparent"></div>
<div style="left:361.40px;top:344.75px;width:9.40px;height:9.30px;border:1.2px solid #6a6d70;border-radius:1.5px;box-sizing:border-box"></div>
<div style="left:151.00px;top:356.20px;width:1.00px;height:11.85px;background:#f8f9fb"></div>
<div class="t" style="left:46.24px;top:358.17px;font-size:8.6px;line-height:8.6px;color:#1f1f1f;">8/13/2024</div>
<div class="t" style="left:89.70px;top:358.17px;font-size:8.6px;line-height:8.6px;color:#1f1f1f;letter-spacing:0.3px;">Deep Clean Bedroom</div>
<div class="t" style="left:218.20px;top:358.17px;font-size:8.6px;line-height:8.6px;color:#1f1f1f;letter-spacing:0.3px;">Weekly</div>
<div class="tri" style="left:268.8px;top:361.20px;border-width:2.2px 2.2px 0 2.2px;border-color:#6f6f6f transparent transparent transparent"></div>
<div class="t" style="left:280.00px;top:358.17px;font-size:8.6px;line-height:8.6px;color:#1f1f1f;letter-spacing:0.3px;">Not Started</div>
<div class="tri" style="left:330.6px;top:361.20px;border-width:2.2px 2.2px 0 2.2px;border-color:#6f6f6f transparent transparent transparent"></div>
<div style="left:361.40px;top:357.60px;width:9.40px;height:9.30px;border:1.2px solid #6a6d70;border-radius:1.5px;box-sizing:border-box"></div>
<div style="left:151.00px;top:369.05px;width:1.00px;height:11.85px;background:#f8f9fb"></div>
<div class="t" style="left:46.24px;top:371.02px;font-size:8.6px;line-height:8.6px;color:#1f1f1f;">8/14/2024</div>
<div class="t" style="left:89.70px;top:371.02px;font-size:8.6px;line-height:8.6px;color:#1f1f1f;letter-spacing:0.3px;">Car Wash</div>
<div class="t" style="left:218.20px;top:371.02px;font-size:8.6px;line-height:8.6px;color:#1f1f1f;letter-spacing:0.3px;">Weekly</div>
<div class="tri" style="left:268.8px;top:374.05px;border-width:2.2px 2.2px 0 2.2px;border-color:#6f6f6f transparent transparent transparent"></div>
<div class="t" style="left:280.00px;top:371.02px;font-size:8.6px;line-height:8.6px;color:#1f1f1f;letter-spacing:0.3px;">Not Started</div>
<div class="tri" style="left:330.6px;top:374.05px;border-width:2.2px 2.2px 0 2.2px;border-color:#6f6f6f transparent transparent transparent"></div>
<div style="left:361.40px;top:370.45px;width:9.40px;height:9.30px;border:1.2px solid #6a6d70;border-radius:1.5px;box-sizing:border-box"></div>
<div style="left:151.00px;top:381.90px;width:1.00px;height:11.85px;background:#f8f9fb"></div>
<div class="t" style="left:46.24px;top:383.87px;font-size:8.6px;line-height:8.6px;color:#1f1f1f;">8/15/2024</div>
<div class="t" style="left:89.70px;top:383.87px;font-size:8.6px;line-height:8.6px;color:#1f1f1f;letter-spacing:0.3px;">Do the Groceries</div>
<div class="t" style="left:218.20px;top:383.87px;font-size:8.6px;line-height:8.6px;color:#1f1f1f;letter-spacing:0.3px;">Weekly</div>
<div class="tri" style="left:268.8px;top:386.90px;border-width:2.2px 2.2px 0 2.2px;border-color:#6f6f6f transparent transparent transparent"></div>
<div class="tri" style="left:330.6px;top:386.90px;border-width:2.2px 2.2px 0 2.2px;border-color:#6f6f6f transparent transparent transparent"></div>
<div style="left:361.40px;top:383.30px;width:9.40px;height:9.30px;border:1.2px solid #6a6d70;border-radius:1.5px;box-sizing:border-box"></div>
<div style="left:151.00px;top:394.75px;width:1.00px;height:11.85px;background:#f8f9fb"></div>
<div class="t" style="left:46.24px;top:396.72px;font-size:8.6px;line-height:8.6px;color:#1f1f1f;">8/16/2024</div>
<div class="t" style="left:89.70px;top:396.72px;font-size:8.6px;line-height:8.6px;color:#1f1f1f;letter-spacing:0.3px;">Laundry</div>
<div class="t" style="left:218.20px;top:396.72px;font-size:8.6px;line-height:8.6px;color:#1f1f1f;letter-spacing:0.3px;">Weekly</div>
<div class="tri" style="left:268.8px;top:399.75px;border-width:2.2px 2.2px 0 2.2px;border-color:#6f6f6f transparent transparent transparent"></div>
<div class="tri" style="left:330.6px;top:399.75px;border-width:2.2px 2.2px 0 2.2px;border-color:#6f6f6f transparent transparent transparent"></div>
<div style="left:361.40px;top:396.15px;width:9.40px;height:9.30px;border:1.2px solid #6a6d70;border-radius:1.5px;box-sizing:border-box"></div>
<div style="left:151.00px;top:407.60px;width:1.00px;height:11.85px;background:#f8f9fb"></div>
<div class="t" style="left:46.24px;top:409.57px;font-size:8.6px;line-height:8.6px;color:#1f1f1f;">8/17/2024</div>
<div class="t" style="left:89.70px;top:409.57px;font-size:8.6px;line-height:8.6px;color:#1f1f1f;letter-spacing:0.3px;">Deep Clean Kitchen</div>
<div class="t" style="left:218.20px;top:409.57px;font-size:8.6px;line-height:8.6px;color:#1f1f1f;letter-spacing:0.3px;">Monthly</div>
<div class="tri" style="left:268.8px;top:412.60px;border-width:2.2px 2.2px 0 2.2px;border-color:#6f6f6f transparent transparent transparent"></div>
<div class="tri" style="left:330.6px;top:412.60px;border-width:2.2px 2.2px 0 2.2px;border-color:#6f6f6f transparent transparent transparent"></div>
<div style="left:361.40px;top:409.00px;width:9.40px;height:9.30px;border:1.2px solid #6a6d70;border-radius:1.5px;box-sizing:border-box"></div>
<div style="left:151.00px;top:420.45px;width:1.00px;height:11.85px;background:#f8f9fb"></div>
<div class="t" style="left:46.24px;top:422.42px;font-size:8.6px;line-height:8.6px;color:#1f1f1f;">8/18/2024</div>
<div class="t" style="left:89.70px;top:422.42px;font-size:8.6px;line-height:8.6px;color:#1f1f1f;letter-spacing:0.3px;">Bathroom Cleaning</div>
<div class="t" style="left:218.20px;top:422.42px;font-size:8.6px;line-height:8.6px;color:#1f1f1f;letter-spacing:0.3px;">Weekly</div>
<div class="tri" style="left:268.8px;top:425.45px;border-width:2.2px 2.2px 0 2.2px;border-color:#6f6f6f transparent transparent transparent"></div>
<div class="tri" style="left:330.6px;top:425.45px;border-width:2.2px 2.2px 0 2.2px;border-color:#6f6f6f transparent transparent transparent"></div>
<div style="left:361.40px;top:421.85px;width:9.40px;height:9.30px;border:1.2px solid #6a6d70;border-radius:1.5px;box-sizing:border-box"></div>
<div style="left:151.00px;top:433.30px;width:1.00px;height:11.85px;background:#f8f9fb"></div>
<div class="t" style="left:46.24px;top:435.27px;font-size:8.6px;line-height:8.6px;color:#1f1f1f;">8/19/2024</div>
<div class="t" style="left:89.70px;top:435.27px;font-size:8.6px;line-height:8.6px;color:#1f1f1f;letter-spacing:0.3px;">Walk the dog</div>
<div class="t" style="left:218.20px;top:435.27px;font-size:8.6px;line-height:8.6px;color:#1f1f1f;letter-spacing:0.3px;">Daily</div>
<div class="tri" style="left:268.8px;top:438.30px;border-width:2.2px 2.2px 0 2.2px;border-color:#6f6f6f transparent transparent transparent"></div>
<div class="tri" style="left:330.6px;top:438.30px;border-width:2.2px 2.2px 0 2.2px;border-color:#6f6f6f transparent transparent transparent"></div>
<div style="left:361.40px;top:434.70px;width:9.40px;height:9.30px;border:1.2px solid #6a6d70;border-radius:1.5px;box-sizing:border-box"></div>
<div style="left:151.00px;top:446.15px;width:1.00px;height:11.85px;background:#f8f9fb"></div>
<div class="t" style="left:46.24px;top:448.12px;font-size:8.6px;line-height:8.6px;color:#1f1f1f;">8/20/2024</div>
<div class="t" style="left:89.70px;top:448.12px;font-size:8.6px;line-height:8.6px;color:#1f1f1f;letter-spacing:0.3px;">Shop for Clothing</div>
<div class="t" style="left:218.20px;top:448.12px;font-size:8.6px;line-height:8.6px;color:#1f1f1f;letter-spacing:0.3px;">Weekly</div>
<div class="tri" style="left:268.8px;top:451.15px;border-width:2.2px 2.2px 0 2.2px;border-color:#6f6f6f transparent transparent transparent"></div>
<div class="tri" style="left:330.6px;top:451.15px;border-width:2.2px 2.2px 0 2.2px;border-color:#6f6f6f transparent transparent transparent"></div>
<div style="left:361.40px;top:447.55px;width:9.40px;height:9.30px;border:1.2px solid #6a6d70;border-radius:1.5px;box-sizing:border-box"></div>
<div style="left:151.00px;top:459.00px;width:1.00px;height:11.85px;background:#f8f9fb"></div>
<div class="t" style="left:46.24px;top:460.97px;font-size:8.6px;line-height:8.6px;color:#1f1f1f;">8/21/2024</div>
<div class="t" style="left:89.70px;top:460.97px;font-size:8.6px;line-height:8.6px;color:#1f1f1f;letter-spacing:0.3px;">Pantry Cleaning</div>
<div class="t" style="left:218.20px;top:460.97px;font-size:8.6px;line-height:8.6px;color:#1f1f1f;letter-spacing:0.3px;">Weekly</div>
<div class="tri" style="left:268.8px;top:464.00px;border-width:2.2px 2.2px 0 2.2px;border-color:#6f6f6f transparent transparent transparent"></div>
<div class="tri" style="left:330.6px;top:464.00px;border-width:2.2px 2.2px 0 2.2px;border-color:#6f6f6f transparent transparent transparent"></div>
<div style="left:361.40px;top:460.40px;width:9.40px;height:9.30px;border:1.2px solid #6a6d70;border-radius:1.5px;box-sizing:border-box"></div>
<div style="left:151.00px;top:471.85px;width:1.00px;height:11.85px;background:#f8f9fb"></div>
<div class="t" style="left:46.24px;top:473.82px;font-size:8.6px;line-height:8.6px;color:#1f1f1f;">8/22/2024</div>
<div class="t" style="left:89.70px;top:473.82px;font-size:8.6px;line-height:8.6px;color:#1f1f1f;letter-spacing:0.3px;">Freezer Cleaning</div>
<div class="t" style="left:218.20px;top:473.82px;font-size:8.6px;line-height:8.6px;color:#1f1f1f;letter-spacing:0.3px;">Weekly</div>
<div class="tri" style="left:268.8px;top:476.85px;border-width:2.2px 2.2px 0 2.2px;border-color:#6f6f6f transparent transparent transparent"></div>
<div class="tri" style="left:330.6px;top:476.85px;border-width:2.2px 2.2px 0 2.2px;border-color:#6f6f6f transparent transparent transparent"></div>
<div style="left:361.40px;top:473.25px;width:9.40px;height:9.30px;border:1.2px solid #6a6d70;border-radius:1.5px;box-sizing:border-box"></div>
<div style="left:151.00px;top:484.70px;width:1.00px;height:11.85px;background:#f8f9fb"></div>
<div class="t" style="left:46.24px;top:486.67px;font-size:8.6px;line-height:8.6px;color:#1f1f1f;">8/23/2024</div>
<div class="t" style="left:89.70px;top:486.67px;font-size:8.6px;line-height:8.6px;color:#1f1f1f;letter-spacing:0.3px;">Wash Curtains</div>
<div class="t" style="left:218.20px;top:486.67px;font-size:8.6px;line-height:8.6px;color:#1f1f1f;letter-spacing:0.3px;">Weekly</div>
<div class="tri" style="left:268.8px;top:489.70px;border-width:2.2px 2.2px 0 2.2px;border-color:#6f6f6f transparent transparent transparent"></div>
<div class="tri" style="left:330.6px;top:489.70px;border-width:2.2px 2.2px 0 2.2px;border-color:#6f6f6f transparent transparent transparent"></div>
<div style="left:361.40px;top:486.10px;width:9.40px;height:9.30px;border:1.2px solid #6a6d70;border-radius:1.5px;box-sizing:border-box"></div>
<div style="left:151.00px;top:497.55px;width:1.00px;height:11.85px;background:#f8f9fb"></div>
<div class="t" style="left:46.24px;top:499.52px;font-size:8.6px;line-height:8.6px;color:#1f1f1f;">8/24/2024</div>
<div class="t" style="left:89.70px;top:499.52px;font-size:8.6px;line-height:8.6px;color:#1f1f1f;letter-spacing:0.3px;">Clean carpet</div>
<div class="t" style="left:218.20px;top:499.52px;font-size:8.6px;line-height:8.6px;color:#1f1f1f;letter-spacing:0.3px;">Weekly</div>
<div class="tri" style="left:268.8px;top:502.55px;border-width:2.2px 2.2px 0 2.2px;border-color:#6f6f6f transparent transparent transparent"></div>
<div class="tri" style="left:330.6px;top:502.55px;border-width:2.2px 2.2px 0 2.2px;border-color:#6f6f6f transparent transparent transparent"></div>
<div style="left:361.40px;top:498.95px;width:9.40px;height:9.30px;border:1.2px solid #6a6d70;border-radius:1.5px;box-sizing:border-box"></div>
<div style="left:151.00px;top:175.90px;width:1.00px;height:23.30px;background:#c27ba0"></div>
<div style="left:406.25px;top:99.30px;width:536.50px;height:25.95px;background:#a64d79"></div>
<div class="t" style="left:580.68px;top:106.16px;font-size:13.4px;line-height:13.4px;color:#fff;letter-spacing:0.65px;-webkit-text-stroke:0.05px #fff;">PERSONAL CHORE CHART</div>
<div style="left:406.25px;top:137.80px;width:236.25px;height:25.30px;background:#741b47"></div>
<div class="t" style="left:478.12px;top:143.09px;font-size:15.6px;line-height:15.6px;color:#fff;letter-spacing:0.45px;-webkit-text-stroke:0.05px #fff;">August 2024</div>
<div style="left:406.25px;top:176.40px;width:536.50px;height:22.80px;background:#b4a7d6"></div>
<div class="t" style="left:426.31px;top:184.07px;font-size:8.3px;line-height:8.3px;color:#333;letter-spacing:0.25px;">SUNDAY</div>
<div class="t" style="left:501.52px;top:184.07px;font-size:8.3px;line-height:8.3px;color:#333;letter-spacing:0.25px;">MONDAY</div>
<div class="t" style="left:580.63px;top:184.07px;font-size:8.3px;line-height:8.3px;color:#333;letter-spacing:0.25px;">TUESDAY</div>
<div class="t" style="left:652.11px;top:184.07px;font-size:8.3px;line-height:8.3px;color:#333;letter-spacing:0.25px;">WEDNESDAY</div>
<div class="t" style="left:728.78px;top:184.07px;font-size:8.3px;line-height:8.3px;color:#333;letter-spacing:0.25px;">THURSDAY</div>
<div class="t" style="left:808.26px;top:184.07px;font-size:8.3px;line-height:8.3px;color:#333;letter-spacing:0.25px;">FRIDAY</div>
<div class="t" style="left:878.44px;top:184.07px;font-size:8.3px;line-height:8.3px;color:#333;letter-spacing:0.25px;">SATURDAY</div>
<div style="left:406.25px;top:201.50px;width:75.00px;height:12.85px;background:#c27ba0"></div>
<div class="t" style="left:469.28px;top:203.87px;font-size:8.6px;line-height:8.6px;color:#1f1f1f;letter-spacing:0.1px;">28</div>
<div style="left:481.25px;top:201.50px;width:77.25px;height:12.85px;background:#c27ba0"></div>
<div class="t" style="left:546.53px;top:203.87px;font-size:8.6px;line-height:8.6px;color:#1f1f1f;letter-spacing:0.1px;">29</div>
<div style="left:558.50px;top:201.50px;width:84.00px;height:12.85px;background:#c27ba0"></div>
<div class="t" style="left:630.53px;top:203.87px;font-size:8.6px;line-height:8.6px;color:#1f1f1f;letter-spacing:0.1px;">30</div>
<div style="left:642.50px;top:201.50px;width:73.75px;height:12.85px;background:#c27ba0"></div>
<div class="t" style="left:704.28px;top:203.87px;font-size:8.6px;line-height:8.6px;color:#1f1f1f;letter-spacing:0.1px;">31</div>
<div style="left:716.25px;top:201.50px;width:71.50px;height:12.85px;background:#ead1dc"></div>
<div class="t" style="left:775.78px;top:203.87px;font-size:8.6px;line-height:8.6px;color:#1f1f1f;letter-spacing:0.1px;">01</div>
<div style="left:787.75px;top:201.50px;width:71.75px;height:12.85px;background:#ead1dc"></div>
<div class="t" style="left:847.53px;top:203.87px;font-size:8.6px;line-height:8.6px;color:#1f1f1f;letter-spacing:0.1px;">02</div>
<div style="left:859.50px;top:201.50px;width:83.25px;height:12.85px;background:#ead1dc"></div>
<div class="t" style="left:930.78px;top:203.87px;font-size:8.6px;line-height:8.6px;color:#1f1f1f;letter-spacing:0.1px;">03</div>
<div style="left:406.25px;top:265.75px;width:75.00px;height:12.85px;background:#ead1dc"></div>
<div class="t" style="left:469.28px;top:268.12px;font-size:8.6px;line-height:8.6px;color:#1f1f1f;letter-spacing:0.1px;">04</div>
<div style="left:481.25px;top:265.75px;width:77.25px;height:12.85px;background:#ead1dc"></div>
<div class="t" style="left:546.53px;top:268.12px;font-size:8.6px;line-height:8.6px;color:#1f1f1f;letter-spacing:0.1px;">05</div>
<div style="left:558.50px;top:265.75px;width:84.00px;height:12.85px;background:#ead1dc"></div>
<div class="t" style="left:630.53px;top:268.12px;font-size:8.6px;line-height:8.6px;color:#1f1f1f;letter-spacing:0.1px;">06</div>
<div style="left:642.50px;top:265.75px;width:73.75px;height:12.85px;background:#ead1dc"></div>
<div class="t" style="left:704.28px;top:268.12px;font-size:8.6px;line-height:8.6px;color:#1f1f1f;letter-spacing:0.1px;">07</div>
<div style="left:716.25px;top:265.75px;width:71.50px;height:12.85px;background:#ead1dc"></div>
<div class="t" style="left:775.78px;top:268.12px;font-size:8.6px;line-height:8.6px;color:#1f1f1f;letter-spacing:0.1px;">08</div>
<div style="left:787.75px;top:265.75px;width:71.75px;height:12.85px;background:#ead1dc"></div>
<div class="t" style="left:847.53px;top:268.12px;font-size:8.6px;line-height:8.6px;color:#1f1f1f;letter-spacing:0.1px;">09</div>
<div style="left:859.50px;top:265.75px;width:83.25px;height:12.85px;background:#ead1dc"></div>
<div class="t" style="left:930.78px;top:268.12px;font-size:8.6px;line-height:8.6px;color:#1f1f1f;letter-spacing:0.1px;">10</div>
<div style="left:406.25px;top:330.00px;width:75.00px;height:12.85px;background:#ead1dc"></div>
<div class="t" style="left:469.92px;top:332.37px;font-size:8.6px;line-height:8.6px;color:#1f1f1f;letter-spacing:0.1px;">11</div>
<div style="left:481.25px;top:330.00px;width:77.25px;height:12.85px;background:#ead1dc"></div>
<div class="t" style="left:546.53px;top:332.37px;font-size:8.6px;line-height:8.6px;color:#1f1f1f;letter-spacing:0.1px;">12</div>
<div style="left:558.50px;top:330.00px;width:84.00px;height:12.85px;background:#ead1dc"></div>
<div class="t" style="left:630.53px;top:332.37px;font-size:8.6px;line-height:8.6px;color:#1f1f1f;letter-spacing:0.1px;">13</div>
<div style="left:642.50px;top:330.00px;width:73.75px;height:12.85px;background:#ead1dc"></div>
<div class="t" style="left:704.28px;top:332.37px;font-size:8.6px;line-height:8.6px;color:#1f1f1f;letter-spacing:0.1px;">14</div>
<div style="left:716.25px;top:330.00px;width:71.50px;height:12.85px;background:#ead1dc"></div>
<div class="t" style="left:775.78px;top:332.37px;font-size:8.6px;line-height:8.6px;color:#1f1f1f;letter-spacing:0.1px;">15</div>
<div style="left:787.75px;top:330.00px;width:71.75px;height:12.85px;background:#ead1dc"></div>
<div class="t" style="left:847.53px;top:332.37px;font-size:8.6px;line-height:8.6px;color:#1f1f1f;letter-spacing:0.1px;">16</div>
<div style="left:859.50px;top:330.00px;width:83.25px;height:12.85px;background:#ead1dc"></div>
<div class="t" style="left:930.78px;top:332.37px;font-size:8.6px;line-height:8.6px;color:#1f1f1f;letter-spacing:0.1px;">17</div>
<div style="left:406.25px;top:394.25px;width:75.00px;height:12.85px;background:#ead1dc"></div>
<div class="t" style="left:469.28px;top:396.62px;font-size:8.6px;line-height:8.6px;color:#1f1f1f;letter-spacing:0.1px;">18</div>
<div style="left:481.25px;top:394.25px;width:77.25px;height:12.85px;background:#ead1dc"></div>
<div class="t" style="left:546.53px;top:396.62px;font-size:8.6px;line-height:8.6px;color:#1f1f1f;letter-spacing:0.1px;">19</div>
<div style="left:558.50px;top:394.25px;width:84.00px;height:12.85px;background:#ead1dc"></div>
<div class="t" style="left:630.53px;top:396.62px;font-size:8.6px;line-height:8.6px;color:#1f1f1f;letter-spacing:0.1px;">20</div>
<div style="left:642.50px;top:394.25px;width:73.75px;height:12.85px;background:#ead1dc"></div>
<div class="t" style="left:704.28px;top:396.62px;font-size:8.6px;line-height:8.6px;color:#1f1f1f;letter-spacing:0.1px;">21</div>
<div style="left:716.25px;top:394.25px;width:71.50px;height:12.85px;background:#ead1dc"></div>
<div class="t" style="left:775.78px;top:396.62px;font-size:8.6px;line-height:8.6px;color:#1f1f1f;letter-spacing:0.1px;">22</div>
<div style="left:787.75px;top:394.25px;width:71.75px;height:12.85px;background:#ead1dc"></div>
<div class="t" style="left:847.53px;top:396.62px;font-size:8.6px;line-height:8.6px;color:#1f1f1f;letter-spacing:0.1px;">23</div>
<div style="left:859.50px;top:394.25px;width:83.25px;height:12.85px;background:#ead1dc"></div>
<div class="t" style="left:930.78px;top:396.62px;font-size:8.6px;line-height:8.6px;color:#1f1f1f;letter-spacing:0.1px;">24</div>
<div style="left:406.25px;top:458.50px;width:75.00px;height:12.85px;background:#ead1dc"></div>
<div class="t" style="left:469.28px;top:460.87px;font-size:8.6px;line-height:8.6px;color:#1f1f1f;letter-spacing:0.1px;">25</div>
<div style="left:481.25px;top:458.50px;width:77.25px;height:12.85px;background:#ead1dc"></div>
<div class="t" style="left:546.53px;top:460.87px;font-size:8.6px;line-height:8.6px;color:#1f1f1f;letter-spacing:0.1px;">26</div>
<div style="left:558.50px;top:458.50px;width:84.00px;height:12.85px;background:#ead1dc"></div>
<div class="t" style="left:630.53px;top:460.87px;font-size:8.6px;line-height:8.6px;color:#1f1f1f;letter-spacing:0.1px;">27</div>
<div style="left:642.50px;top:458.50px;width:73.75px;height:12.85px;background:#ead1dc"></div>
<div class="t" style="left:704.28px;top:460.87px;font-size:8.6px;line-height:8.6px;color:#1f1f1f;letter-spacing:0.1px;">28</div>
<div style="left:716.25px;top:458.50px;width:71.50px;height:12.85px;background:#ead1dc"></div>
<div class="t" style="left:775.78px;top:460.87px;font-size:8.6px;line-height:8.6px;color:#1f1f1f;letter-spacing:0.1px;">29</div>
<div style="left:787.75px;top:458.50px;width:71.75px;height:12.85px;background:#ead1dc"></div>
<div class="t" style="left:847.53px;top:460.87px;font-size:8.6px;line-height:8.6px;color:#1f1f1f;letter-spacing:0.1px;">30</div>
<div style="left:859.50px;top:458.50px;width:83.25px;height:12.85px;background:#ead1dc"></div>
<div class="t" style="left:930.78px;top:460.87px;font-size:8.6px;line-height:8.6px;color:#1f1f1f;letter-spacing:0.1px;">31</div>
<div style="left:716.75px;top:214.82px;width:70.50px;height:14.6px;overflow:hidden"><div class="t" style="left:718.65px;top:216.82px;font-size:8.6px;line-height:8.6px;color:#1f1f1f;letter-spacing:0.3px;;left:1.90px;top:2px">Deep Clean Bedroom</div></div>
<div style="left:860.00px;top:214.82px;width:100.00px;height:14.6px;overflow:hidden"><div class="t" style="left:861.90px;top:216.82px;font-size:8.6px;line-height:8.6px;color:#1f1f1f;letter-spacing:0.3px;;left:1.90px;top:2px">Do the Groceries</div></div>
<div style="left:716.75px;top:227.67px;width:70.50px;height:14.6px;overflow:hidden"><div class="t" style="left:718.65px;top:229.67px;font-size:8.6px;line-height:8.6px;color:#1f1f1f;letter-spacing:0.3px;;left:1.90px;top:2px">Car Wash</div></div>
<div style="left:406.75px;top:279.07px;width:74.00px;height:14.6px;overflow:hidden"><div class="t" style="left:408.65px;top:281.07px;font-size:8.6px;line-height:8.6px;color:#1f1f1f;letter-spacing:0.3px;;left:1.90px;top:2px">Laundry</div></div>
<div style="left:481.75px;top:279.07px;width:76.25px;height:14.6px;overflow:hidden"><div class="t" style="left:483.65px;top:281.07px;font-size:8.6px;line-height:8.6px;color:#1f1f1f;letter-spacing:0.3px;;left:1.90px;top:2px">Deep Clean Kitchen</div></div>
<div style="left:559.00px;top:279.07px;width:83.00px;height:14.6px;overflow:hidden"><div class="t" style="left:560.90px;top:281.07px;font-size:8.6px;line-height:8.6px;color:#1f1f1f;letter-spacing:0.3px;;left:1.90px;top:2px">Bathroom Cleaning</div></div>
<div style="left:643.00px;top:279.07px;width:72.75px;height:14.6px;overflow:hidden"><div class="t" style="left:644.90px;top:281.07px;font-size:8.6px;line-height:8.6px;color:#1f1f1f;letter-spacing:0.3px;;left:1.90px;top:2px">Walk the dog</div></div>
<div style="left:716.75px;top:279.07px;width:70.50px;height:14.6px;overflow:hidden"><div class="t" style="left:718.65px;top:281.07px;font-size:8.6px;line-height:8.6px;color:#1f1f1f;letter-spacing:0.3px;;left:1.90px;top:2px">Shop for Clothing</div></div>
<div style="left:788.25px;top:279.07px;width:70.75px;height:14.6px;overflow:hidden"><div class="t" style="left:790.15px;top:281.07px;font-size:8.6px;line-height:8.6px;color:#1f1f1f;letter-spacing:0.3px;;left:1.90px;top:2px">Pantry Cleaning</div></div>
<div style="left:860.00px;top:279.07px;width:100.00px;height:14.6px;overflow:hidden"><div class="t" style="left:861.90px;top:281.07px;font-size:8.6px;line-height:8.6px;color:#1f1f1f;letter-spacing:0.3px;;left:1.90px;top:2px">Freezer Cleaning</div></div>
<div style="left:406.75px;top:343.32px;width:74.00px;height:14.6px;overflow:hidden"><div class="t" style="left:408.65px;top:345.32px;font-size:8.6px;line-height:8.6px;color:#1f1f1f;letter-spacing:0.3px;;left:1.90px;top:2px">Wash Curtains</div></div>
<div style="left:481.75px;top:343.32px;width:76.25px;height:14.6px;overflow:hidden"><div class="t" style="left:483.65px;top:345.32px;font-size:8.6px;line-height:8.6px;color:#1f1f1f;letter-spacing:0.3px;;left:1.90px;top:2px">Clean carpet</div></div>
<div style="left:559.00px;top:343.32px;width:83.00px;height:14.6px;overflow:hidden"><div class="t" style="left:560.90px;top:345.32px;font-size:8.6px;line-height:8.6px;color:#1f1f1f;letter-spacing:0.3px;;left:1.90px;top:2px">Deep Clean Bedroom</div></div>
<div style="left:643.00px;top:343.32px;width:72.75px;height:14.6px;overflow:hidden"><div class="t" style="left:644.90px;top:345.32px;font-size:8.6px;line-height:8.6px;color:#1f1f1f;letter-spacing:0.3px;;left:1.90px;top:2px">Car Wash</div></div>
<div style="left:716.75px;top:343.32px;width:70.50px;height:14.6px;overflow:hidden"><div class="t" style="left:718.65px;top:345.32px;font-size:8.6px;line-height:8.6px;color:#1f1f1f;letter-spacing:0.3px;;left:1.90px;top:2px">Do the Groceries</div></div>
<div style="left:788.25px;top:343.32px;width:70.75px;height:14.6px;overflow:hidden"><div class="t" style="left:790.15px;top:345.32px;font-size:8.6px;line-height:8.6px;color:#1f1f1f;letter-spacing:0.3px;;left:1.90px;top:2px">Laundry</div></div>
<div style="left:860.00px;top:343.32px;width:100.00px;height:14.6px;overflow:hidden"><div class="t" style="left:861.90px;top:345.32px;font-size:8.6px;line-height:8.6px;color:#1f1f1f;letter-spacing:0.3px;;left:1.90px;top:2px">Deep Clean Kitchen</div></div>
<div style="left:406.75px;top:407.57px;width:74.00px;height:14.6px;overflow:hidden"><div class="t" style="left:408.65px;top:409.57px;font-size:8.6px;line-height:8.6px;color:#1f1f1f;letter-spacing:0.3px;;left:1.90px;top:2px">Bathroom Cleaning</div></div>
<div style="left:481.75px;top:407.57px;width:76.25px;height:14.6px;overflow:hidden"><div class="t" style="left:483.65px;top:409.57px;font-size:8.6px;line-height:8.6px;color:#1f1f1f;letter-spacing:0.3px;;left:1.90px;top:2px">Walk the dog</div></div>
<div style="left:559.00px;top:407.57px;width:83.00px;height:14.6px;overflow:hidden"><div class="t" style="left:560.90px;top:409.57px;font-size:8.6px;line-height:8.6px;color:#1f1f1f;letter-spacing:0.3px;;left:1.90px;top:2px">Shop for Clothing</div></div>
<div style="left:643.00px;top:407.57px;width:72.75px;height:14.6px;overflow:hidden"><div class="t" style="left:644.90px;top:409.57px;font-size:8.6px;line-height:8.6px;color:#1f1f1f;letter-spacing:0.3px;;left:1.90px;top:2px">Pantry Cleaning</div></div>
<div style="left:716.75px;top:407.57px;width:70.50px;height:14.6px;overflow:hidden"><div class="t" style="left:718.65px;top:409.57px;font-size:8.6px;line-height:8.6px;color:#1f1f1f;letter-spacing:0.3px;;left:1.90px;top:2px">Freezer Cleaning</div></div>
<div style="left:788.25px;top:407.57px;width:70.75px;height:14.6px;overflow:hidden"><div class="t" style="left:790.15px;top:409.57px;font-size:8.6px;line-height:8.6px;color:#1f1f1f;letter-spacing:0.3px;;left:1.90px;top:2px">Wash Curtains</div></div>
<div style="left:860.00px;top:407.57px;width:100.00px;height:14.6px;overflow:hidden"><div class="t" style="left:861.90px;top:409.57px;font-size:8.6px;line-height:8.6px;color:#1f1f1f;letter-spacing:0.3px;;left:1.90px;top:2px">Clean carpet</div></div>
<div style="left:406.75px;top:471.82px;width:74.00px;height:14.6px;overflow:hidden"><div class="t" style="left:408.65px;top:473.82px;font-size:8.6px;line-height:8.6px;color:#1f1f1f;letter-spacing:0.3px;;left:1.90px;top:2px">Deep Clean Bedroom</div></div>
<div style="left:481.75px;top:471.82px;width:76.25px;height:14.6px;overflow:hidden"><div class="t" style="left:483.65px;top:473.82px;font-size:8.6px;line-height:8.6px;color:#1f1f1f;letter-spacing:0.3px;;left:1.90px;top:2px">Car Wash</div></div>
<div style="left:559.00px;top:471.82px;width:83.00px;height:14.6px;overflow:hidden"><div class="t" style="left:560.90px;top:473.82px;font-size:8.6px;line-height:8.6px;color:#1f1f1f;letter-spacing:0.3px;;left:1.90px;top:2px">Do the Groceries</div></div>
<div style="left:643.00px;top:471.82px;width:72.75px;height:14.6px;overflow:hidden"><div class="t" style="left:644.90px;top:473.82px;font-size:8.6px;line-height:8.6px;color:#1f1f1f;letter-spacing:0.3px;;left:1.90px;top:2px">Laundry</div></div>
<div style="left:716.75px;top:471.82px;width:70.50px;height:14.6px;overflow:hidden"><div class="t" style="left:718.65px;top:473.82px;font-size:8.6px;line-height:8.6px;color:#1f1f1f;letter-spacing:0.3px;;left:1.90px;top:2px">Deep Clean Kitchen</div></div>
<div style="left:788.25px;top:471.82px;width:70.75px;height:14.6px;overflow:hidden"><div class="t" style="left:790.15px;top:473.82px;font-size:8.6px;line-height:8.6px;color:#1f1f1f;letter-spacing:0.3px;;left:1.90px;top:2px">Bathroom Cleaning</div></div>
<div style="left:405.65px;top:176.00px;width:1.20px;height:332.40px;background:#6a6a6a"></div>
<div style="left:480.65px;top:176.00px;width:1.20px;height:332.40px;background:#6a6a6a"></div>
<div style="left:557.90px;top:176.00px;width:1.20px;height:332.40px;background:#6a6a6a"></div>
<div style="left:641.90px;top:176.00px;width:1.20px;height:332.40px;background:#6a6a6a"></div>
<div style="left:715.65px;top:176.00px;width:1.20px;height:332.40px;background:#6a6a6a"></div>
<div style="left:787.15px;top:176.00px;width:1.20px;height:332.40px;background:#6a6a6a"></div>
<div style="left:858.90px;top:176.00px;width:1.20px;height:332.40px;background:#6a6a6a"></div>
<div style="left:942.15px;top:176.00px;width:1.20px;height:332.40px;background:#6a6a6a"></div>
<div style="left:405.65px;top:176.00px;width:537.70px;height:1.00px;background:#5a5a5a"></div>
<div style="left:0.00px;top:199.20px;width:1018.50px;height:2.35px;background:#c9cacb"></div>
<div style="left:25.30px;top:98.90px;width:62.10px;height:14.00px;border:1.5px solid #2f7de9;border-left-width:1.1px;box-sizing:border-box;background:#fff"></div>
<div style="left:84.20px;top:109.40px;width:5.60px;height:5.60px;background:#1a73e8;border-radius:50%;border:0.7px solid #fff;box-sizing:border-box"></div>
<div style="left:25.50px;top:508.40px;width:993.00px;height:7.10px;background:#f8f9fb"></div>
<div style="left:25.50px;top:508.00px;width:993.00px;height:0.70px;background:#e7e8ea"></div>
<div style="left:27.00px;top:508.80px;width:522.50px;height:5.40px;background:#dcdddf;border-radius:2.6px"></div>
<div style="left:1000.40px;top:508.40px;width:18.10px;height:7.10px;background:#f1f2f4"></div>
<div style="left:1009.20px;top:508.40px;width:0.60px;height:7.10px;background:#e3e4e6"></div>
<div style="left:1018.50px;top:84.40px;width:5.50px;height:431.10px;background:#f9fbfd"></div>
<div style="left:1018.50px;top:84.40px;width:0.60px;height:431.10px;background:#e1e3e6"></div>
<div style="left:1020.00px;top:202.90px;width:4.00px;height:15.10px;background:#dadce0;border-radius:2px"></div>
<div style="left:1019.10px;top:488.40px;width:4.90px;height:20.00px;background:#f3f4f6"></div>
<div style="left:1019.10px;top:498.60px;width:4.90px;height:0.60px;background:#e3e4e6"></div>
<div class="tri" style="left:1021px;top:491.8px;border-width:0 2.2px 2.2px 2.2px;border-color:transparent transparent #8a8d90 transparent"></div>
<div class="tri" style="left:1021px;top:502px;border-width:2.2px 2.2px 0 2.2px;border-color:#8a8d90 transparent transparent transparent"></div>
<div class="tri" style="left:1003.2px;top:509.8px;border-width:2.1px 2.1px 2.1px 0;border-color:transparent #8a8d90 transparent transparent"></div>
<div class="tri" style="left:1013px;top:509.8px;border-width:2.1px 0 2.1px 2.1px;border-color:transparent transparent transparent #8a8d90"></div>
<div style="left:0.00px;top:515.50px;width:1024.00px;height:20.50px;background:linear-gradient(#f9fbfd,#eceef2)"></div>
<div style="left:32.00px;top:527.60px;width:6.60px;height:1.20px;background:#444746"></div>
<div style="left:34.70px;top:525.00px;width:1.20px;height:6.40px;background:#444746"></div>
<div style="left:55.50px;top:525.20px;width:8.70px;height:1.10px;background:#444746"></div>
<div style="left:55.50px;top:527.70px;width:8.70px;height:1.10px;background:#444746"></div>
<div style="left:55.50px;top:530.20px;width:8.70px;height:1.10px;background:#444746"></div>
<div style="left:80.00px;top:515.50px;width:54.80px;height:20.50px;background:linear-gradient(#e3eaf7,#dde3ef)"></div>
<div class="t" style="left:87.00px;top:524.05px;font-size:8.8px;line-height:8.8px;color:#0b57d0;font-weight:bold;-webkit-text-stroke:0;">Sheet1</div>
<div class="tri" style="left:122.8px;top:527.2px;border-width:2.4px 2.4px 0 2.4px;border-color:#0b57d0 transparent transparent transparent"></div>
<svg style="position:absolute;left:1005px;top:524px" width="6" height="8" viewBox="0 0 12 16"><path d="M9 2L3 8l6 6" fill="none" stroke="#444746" stroke-width="2.2"/></svg>
</body></html>
